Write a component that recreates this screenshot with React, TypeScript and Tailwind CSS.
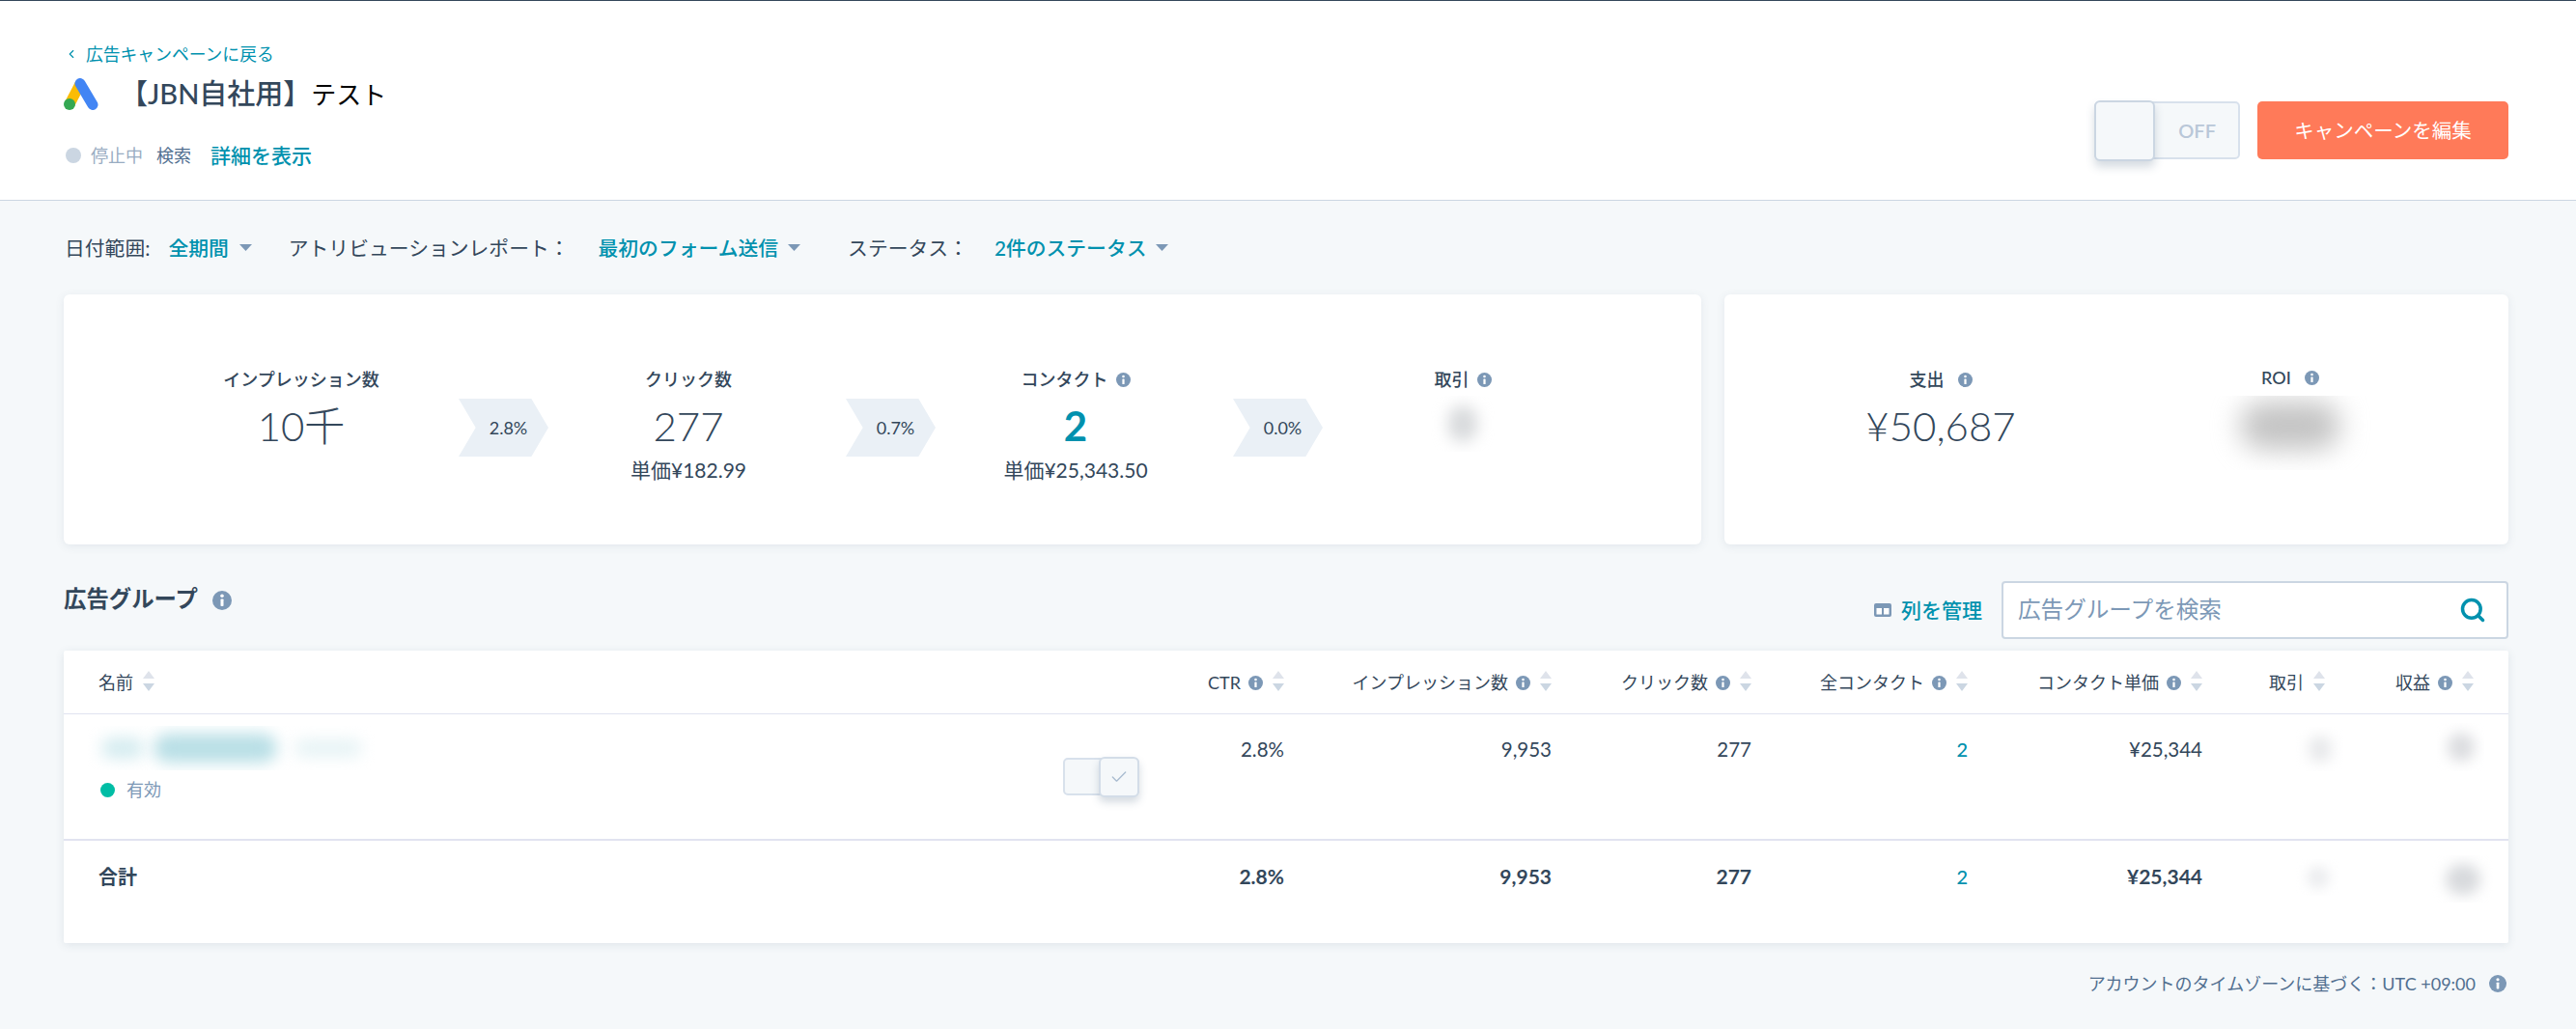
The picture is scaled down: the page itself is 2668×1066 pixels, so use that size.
import React from 'react';
import { Check, ChevronLeft, Search } from 'lucide-react';

const FONT = "font-['Lato','Noto_Sans_CJK_JP',sans-serif]";

function InfoIcon({ className }: { className: string }) {
  return (
    <svg viewBox="0 0 16 16" className={`shrink-0 ${className}`}>
      <circle cx="8" cy="8" r="8" fill="#7c98b6" />
      <circle cx="8" cy="4.2" r="1.4" fill="#fff" />
      <rect x="6.8" y="6.8" width="2.4" height="6" rx="0.6" fill="#fff" />
    </svg>
  );
}

function SortIcon() {
  return (
    <svg viewBox="0 0 12 21" className="h-[21px] w-[12px] shrink-0 -translate-y-[2px]">
      <path d="M6 0l6 8H0z" fill="#dfe3eb" />
      <path d="M6 21l6-8H0z" fill="#cbd6e2" />
    </svg>
  );
}

function Caret() {
  return (
    <svg viewBox="0 0 13 7" className="h-[7px] w-[13px]">
      <path d="M0 0h13L6.5 7z" fill="#7c98b6" />
    </svg>
  );
}

function AdsLogo() {
  return (
    <svg viewBox="0 0 36 33" className="h-[33px] w-[36px] shrink-0">
      <line x1="17" y1="6" x2="6" y2="27" stroke="#fbbc04" strokeWidth="11" />
      <line x1="17" y1="5.5" x2="30" y2="27.5" stroke="#4285f4" strokeWidth="11" strokeLinecap="round" />
      <circle cx="6" cy="27" r="6" fill="#34a853" />
    </svg>
  );
}

function Blur({ className, blobClassName }: { className: string; blobClassName: string }) {
  return (
    <div className={`flex items-center justify-center overflow-hidden ${className}`}>
      <div className={blobClassName} />
    </div>
  );
}

function Chevron({ pct }: { pct: string }) {
  return (
    <div className="mt-[32px] ml-[18px] flex h-[60px] w-[93px] shrink-0 items-center justify-center bg-[#eaf0f6] pl-[10px] text-[18px] [clip-path:polygon(0_0,81%_0,100%_50%,81%_100%,0_100%,19%_50%)]">
      {pct}
    </div>
  );
}

function FunnelCol({ label, info, value, sub, teal }: { label: string; info?: boolean; value?: string; sub?: string; teal?: boolean }) {
  return (
    <div className="flex w-[290px] shrink-0 flex-col items-center">
      <div className="flex h-[24px] items-center gap-[8px] text-[18px] font-medium">
        {label}
        {info && <InfoIcon className="h-[15px] w-[15px]" />}
      </div>
      {value ? (
        <div className={`mt-[11px] h-[50px] text-[42px] leading-[50px] ${teal ? 'font-bold text-[#0091ae]' : 'font-light'}`}>{value}</div>
      ) : (
        <Blur className="mt-[5px] h-[58px] w-[66px]" blobClassName="h-[38px] w-[30px] rounded-full bg-[#d8dadc] blur-[8px]" />
      )}
      {sub && <div className="mt-[8px] text-[21px] leading-[26px]">{sub}</div>}
    </div>
  );
}

const COLUMNS = [
  { label: 'CTR', info: true, sort: true },
  { label: 'インプレッション数', info: true, sort: true },
  { label: 'クリック数', info: true, sort: true },
  { label: '全コンタクト', info: true, sort: true },
  { label: 'コンタクト単価', info: true, sort: true },
  { label: '取引', info: false, sort: true },
  { label: '収益', info: true, sort: true },
];

const GRID = 'grid grid-cols-[1fr_141px_277px_207px_224px_243px_127px_154px] pl-[36px] pr-[36px]';

function ValueCells({ values, bold }: { values: string[]; bold?: boolean }) {
  return (
    <>
      {values.map((v, i) => (
        <div
          key={i}
          className={`text-right leading-[26px] ${i === 3 ? 'text-[20px] font-medium text-[#0091ae]' : bold ? 'text-[21px] font-bold' : 'text-[20.5px]'}`}
        >
          {v}
        </div>
      ))}
    </>
  );
}

export default function App() {
  return (
    <div className={`${FONT} min-h-[1066px] bg-[#f5f8fa] text-[#33475b]`}>
      <header className="flex h-[208px] justify-between border-t border-b border-t-[#33475b] border-b-[#cbd6e2] bg-white pr-[70px] pl-[66px]">
        <div className="pt-[43px]">
          <a className="flex h-[24px] items-center gap-[8px] pl-[1px] text-[17.8px] text-[#0091ae]">
            <ChevronLeft size={14} strokeWidth={2} />
            広告キャンペーンに戻る
          </a>
          <div className="mt-[11px] flex h-[36px] items-center gap-[22px]">
            <AdsLogo />
            <h1 className="text-[29px] leading-[36px] font-medium">
              【JBN自社用】<span className="text-[26px] font-normal text-black">テスト</span>
            </h1>
          </div>
          <div className="mt-[33px] flex h-[26px] items-center pl-[2px]">
            <span className="h-[16px] w-[16px] rounded-full bg-[#cbd6e2]" />
            <span className="ml-[10px] text-[18px] text-[#99acc2]">停止中</span>
            <span className="ml-[14px] text-[18px] text-[#516f90]">検索</span>
            <a className="ml-[20px] text-[21px] font-medium text-[#0091ae]">詳細を表示</a>
          </div>
        </div>
        <div className="flex items-start gap-[18px] pt-[104px]">
          <div className="relative flex h-[60px] w-[151px] items-center justify-end rounded-[5px] border-2 border-[#d8e1ec] bg-[#f5f8fa] pr-[23px] text-[20px] font-semibold text-[#b9c7d8]">
            OFF
            <span className="absolute -top-[3px] -left-[2px] h-[63px] w-[63px] rounded-[6px] border-2 border-[#cbd6e2] bg-[#f5f8fa] shadow-[0_6px_10px_rgba(66,91,118,0.22)]" />
          </div>
          <button className="h-[60px] w-[260px] rounded-[5px] bg-[#ff7a59] text-[20.5px] text-white">キャンペーンを編集</button>
        </div>
      </header>

      <main className="pr-[70px] pl-[66px]">
        <div className="flex h-[97px] items-center pl-[1px] text-[20.8px]">
          <span>日付範囲:</span>
          <span className="ml-[19px] font-medium text-[#0091ae]">全期間</span>
          <span className="ml-[11px]"><Caret /></span>
          <span className="ml-[38px]">アトリビューションレポート：</span>
          <span className="ml-[30px] font-medium text-[#0091ae]">最初のフォーム送信</span>
          <span className="ml-[10px]"><Caret /></span>
          <span className="ml-[49px]">ステータス：</span>
          <span className="ml-[27px] font-medium text-[#0091ae]">2件のステータス</span>
          <span className="ml-[9px]"><Caret /></span>
        </div>

        <section className="flex h-[259px] gap-[24px]">
          <div className="flex w-[1696px] rounded-[6px] bg-white pt-[76px] pl-[101px] shadow-[0_2px_10px_rgba(66,91,118,0.1)]">
            <FunnelCol label="インプレッション数" value="10千" />
            <Chevron pct="2.8%" />
            <FunnelCol label="クリック数" value="277" sub="単価¥182.99" />
            <Chevron pct="0.7%" />
            <FunnelCol label="コンタクト" info value="2" sub="単価¥25,343.50" teal />
            <Chevron pct="0.0%" />
            <FunnelCol label="取引" info />
          </div>
          <div className="grid flex-1 grid-cols-[362px_362px] rounded-[6px] bg-white pt-[76px] pl-[43px] shadow-[0_2px_10px_rgba(66,91,118,0.1)]">
            <div className="flex flex-col items-center">
              <div className="flex h-[24px] items-center gap-[14px] text-[18px] font-medium">
                支出
                <InfoIcon className="h-[15px] w-[15px]" />
              </div>
              <div className="mt-[11px] text-[42px] leading-[50px] font-light">¥50,687</div>
            </div>
            <div className="flex flex-col items-center">
              <div className="-mt-[2px] flex h-[24px] items-center gap-[14px] text-[18px] font-medium">
                ROI
                <InfoIcon className="h-[15px] w-[15px]" />
              </div>
              <Blur className="mt-[7px] h-[77px] w-[180px]" blobClassName="h-[50px] w-[104px] -translate-y-[8px] rounded-full bg-[#c4c4c4] blur-[14px]" />
            </div>
          </div>
        </section>

        <div className="mt-[38px] flex h-[60px] items-start justify-between">
          <div className="flex items-center gap-[15px]">
            <h2 className="text-[23.4px] leading-[36px] font-semibold">広告グループ</h2>
            <InfoIcon className="mt-[4px] h-[20px] w-[20px]" />
          </div>
          <div className="flex items-center">
            <svg viewBox="0 0 18 14" className="h-[14px] w-[18px]">
              <rect width="18" height="14" rx="2" fill="#7c98b6" />
              <rect x="2.5" y="5" width="5.5" height="6.5" fill="#fff" />
              <rect x="10" y="5" width="5.5" height="6.5" fill="#fff" />
            </svg>
            <a className="ml-[10px] text-[21px] font-medium text-[#0091ae]">列を管理</a>
            <div className="ml-[20px] flex h-[60px] w-[525px] items-center justify-between rounded-[4px] border-2 border-[#cbd6e2] bg-white pr-[21px] pl-[15px]">
              <span className="text-[23.6px] text-[#7c98b6]">広告グループを検索</span>
              <Search size={28} strokeWidth={3} className="text-[#0091ae]" />
            </div>
          </div>
        </div>

        <section className="mt-[12px] h-[303px] rounded-[2px] bg-white shadow-[0_2px_10px_rgba(66,91,118,0.12)]">
          <div className={`${GRID} h-[66px] items-center border-b border-[#e1e3f0] pt-[2px] text-[18px]`}>
            <div className="flex items-center gap-[10px]">
              名前
              <SortIcon />
            </div>
            {COLUMNS.map((c) => (
              <div key={c.label} className="flex items-center justify-end gap-[8px]">
                {c.label}
                {c.info && <InfoIcon className="h-[15px] w-[15px]" />}
                <span className="ml-[2px] flex"><SortIcon /></span>
              </div>
            ))}
          </div>

          <div className={`${GRID} h-[131px] border-b-2 border-[#e1e3f0] pt-[23px]`}>
            <div className="-mt-[11px] flex justify-between pr-[9px]">
              <div className="-ml-[11px]">
                <div className="flex h-[46px] w-[297px] items-center gap-[10px] overflow-hidden pl-[14px]">
                  <div className="h-[22px] w-[44px] shrink-0 rounded-full bg-[#d5ecf0] blur-[8px]" />
                  <div className="h-[30px] w-[128px] shrink-0 rounded-full bg-[#b9dfe6] blur-[8px]" />
                  <div className="ml-[8px] h-[18px] w-[70px] shrink-0 rounded-full bg-[#e6f3f5] blur-[8px]" />
                </div>
                <div className="mt-[8px] flex h-[24px] items-center gap-[12px] pl-[13px] text-[18px] text-[#7c98b6]">
                  <span className="h-[15px] w-[15px] rounded-full bg-[#00bda5]" />
                  有効
                </div>
              </div>
              <div className="relative mt-[33px] flex h-[39px] w-[79px] rounded-[5px] border-2 border-[#d8e1ec] bg-[#f5f8fa]">
                <span className="absolute -top-[3px] -right-[2px] flex h-[42px] w-[42px] items-center justify-center rounded-[6px] border-2 border-[#d3dde8] bg-[#f5f8fa] shadow-[0_5px_8px_rgba(66,91,118,0.22)]">
                  <Check size={20} strokeWidth={1.6} className="text-[#a9bcd0]" />
                </span>
              </div>
            </div>
            <ValueCells values={['2.8%', '9,953', '277', '2', '¥25,344']} />
            <div className="-mt-[10px] flex justify-end">
              <Blur className="-mr-[19px] h-[46px] w-[49px]" blobClassName="h-[28px] w-[24px] rounded-full bg-[#e8e9eb] blur-[7px]" />
            </div>
            <div className="-mt-[14px] flex justify-end">
              <Blur className="-mr-[11px] h-[50px] w-[49px]" blobClassName="h-[30px] w-[28px] rounded-full bg-[#dcdde0] blur-[7px]" />
            </div>
          </div>

          <div className={`${GRID} h-[106px] pt-[24px]`}>
            <div className="text-[20px] leading-[26px] font-bold">合計</div>
            <ValueCells bold values={['2.8%', '9,953', '277', '2', '¥25,344']} />
            <div className="-mt-[5px] flex justify-end">
              <Blur className="-mr-[15px] h-[38px] w-[45px]" blobClassName="h-[24px] w-[24px] rounded-full bg-[#edeef0] blur-[6px]" />
            </div>
            <div className="-mt-[9px] flex justify-end">
              <Blur className="-mr-[20px] h-[49px] w-[63px]" blobClassName="h-[32px] w-[36px] rounded-full bg-[#d8dadd] blur-[7px]" />
            </div>
          </div>
        </section>

        <div className="mt-[30px] flex h-[24px] items-center justify-end gap-[14px] pr-[2px] text-[18px] text-[#516f90]">
          アカウントのタイムゾーンに基づく：UTC +09:00
          <InfoIcon className="h-[18px] w-[18px]" />
        </div>
      </main>
    </div>
  );
}
